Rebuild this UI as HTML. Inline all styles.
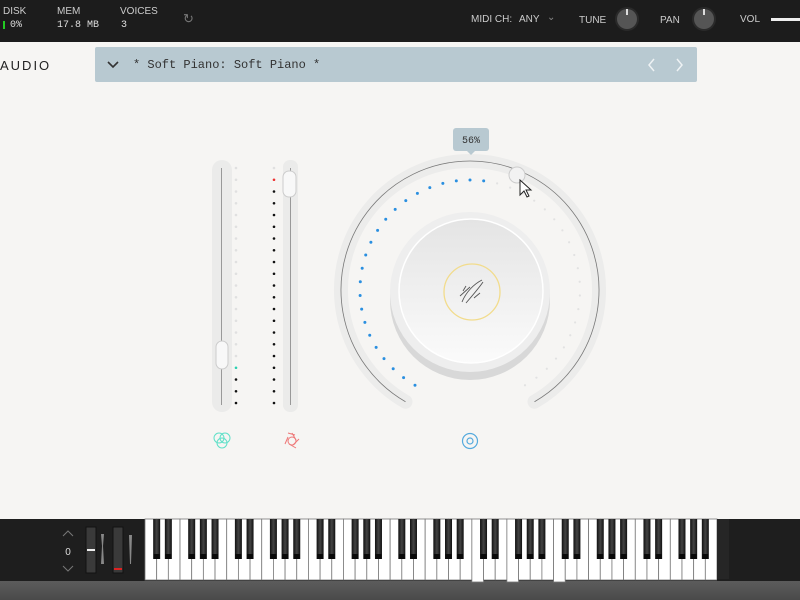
<!DOCTYPE html>
<html><head><meta charset="utf-8"><style>
body{margin:0;width:800px;height:600px;overflow:hidden;background:#f6f5f3;font-family:"Liberation Sans",sans-serif;position:relative}
.top{position:absolute;left:0;top:0;width:800px;height:42px;background:#1c1c1c;color:#ddd}
.t{position:absolute;font-size:10px;color:#ccc}
.m{position:absolute;font-family:"Liberation Mono",monospace;font-size:10px;color:#ddd}
.preset{position:absolute;left:95px;top:47px;width:602px;height:35px;background:#b8c9d1;border-radius:2px}
</style></head><body>
<div class="top">
<div class="t" style="left:3px;top:6px">DISK</div>
<div style="position:absolute;left:3px;top:21px;width:2px;height:8px;background:#2c2"></div>
<div class="m" style="left:10px;top:20px">0%</div>
<div class="t" style="left:57px;top:6px">MEM</div>
<div class="m" style="left:57px;top:20px">17.8 MB</div>
<div class="t" style="left:120px;top:6px">VOICES</div>
<div class="m" style="left:121px;top:20px">3</div>
<div class="t" style="left:183px;top:11px;font-size:13px;color:#777">↻</div>
<div class="t" style="left:471px;top:14px">MIDI CH:</div>
<div class="t" style="left:519px;top:14px">ANY</div>
<div class="t" style="left:547px;top:12px;color:#888">⌄</div>
<div class="t" style="left:579px;top:15px">TUNE</div>
<div style="position:absolute;left:617px;top:9px;width:20px;height:20px;border-radius:50%;background:#555;box-shadow:0 0 0 2px #2a2a2a"></div>
<div style="position:absolute;left:626px;top:9px;width:2px;height:6px;background:#ddd"></div>
<div class="t" style="left:660px;top:15px">PAN</div>
<div style="position:absolute;left:694px;top:9px;width:20px;height:20px;border-radius:50%;background:#555;box-shadow:0 0 0 2px #2a2a2a"></div>
<div style="position:absolute;left:703px;top:9px;width:2px;height:6px;background:#ddd"></div>
<div class="t" style="left:740px;top:14px">VOL</div>
<div style="position:absolute;left:771px;top:18px;width:29px;height:3px;background:#eee"></div>
</div>
<div style="position:absolute;left:0;top:58px;font-size:13px;letter-spacing:2px;color:#222">AUDIO</div>
<div class="preset">
<svg style="position:absolute;left:12px;top:13px" width="12" height="9"><path d="M1 2 L6 7 L11 2" stroke="#333" stroke-width="1.6" fill="none"/></svg>
<div style="position:absolute;left:38px;top:11px;font-family:'Liberation Mono',monospace;font-size:12px;color:#333">* Soft Piano: Soft Piano *</div>
<svg style="position:absolute;left:552px;top:11px" width="40" height="14"><path d="M7 1 L2 7 L7 13 M30 1 L35 7 L30 13" stroke="#eef2f4" stroke-width="1.5" fill="none"/></svg>
</div>
<svg id="main" width="800" height="600" style="position:absolute;left:0;top:0">
<defs>
<linearGradient id="kg" x1="0" y1="0" x2="0" y2="1"><stop offset="0" stop-color="#e4e4e4"/><stop offset="1" stop-color="#fbfbfb"/></linearGradient>
<linearGradient id="bk" x1="0" y1="0" x2="1" y2="0"><stop offset="0" stop-color="#111"/><stop offset=".5" stop-color="#444"/><stop offset="1" stop-color="#111"/></linearGradient>
<linearGradient id="bg" x1="0" y1="0" x2="0" y2="1"><stop offset="0" stop-color="#5c5c5c"/><stop offset="1" stop-color="#4a4a4a"/></linearGradient>
</defs>
<rect x="212" y="160" width="20" height="252" rx="10" fill="#ebebea"/>
<line x1="221.5" y1="168" x2="221.5" y2="405" stroke="#999" stroke-width="1"/>
<rect x="216" y="341" width="12" height="28" rx="6" fill="#f8f8f8" stroke="#ccc"/>
<rect x="283" y="160" width="15" height="252" rx="7" fill="#ebebea"/>
<line x1="290.5" y1="168" x2="290.5" y2="405" stroke="#999" stroke-width="1"/>
<rect x="283" y="171" width="13" height="26" rx="6" fill="#f8f8f8" stroke="#ccc"/>
<g id="dots"></g>
<path id="track" fill="none" stroke="#ececeb" stroke-width="14" stroke-linecap="round"/>
<path id="track2" fill="none" stroke="#777" stroke-width="0.8"/>
<circle cx="470" cy="300" r="80" fill="#d8d8d8"/>
<circle cx="470" cy="292" r="80" fill="#eeeeee"/>
<circle cx="471" cy="291" r="72" fill="url(#kg)" stroke="#fff" stroke-width="1.5"/>
<circle cx="472" cy="292" r="28" fill="none" stroke="#f2dc8c" stroke-width="1.3"/>
<path d="M462 302 C466 292 474 284 482 280 M466 303 C472 296 479 288 483 282 M460 296 L470 287 M474 298 L480 293 M463 291 L466 286" stroke="#555" stroke-width="0.9" fill="none"/>
<circle cx="517" cy="175" r="8" fill="#f2f2f2" stroke="#ccc"/>
<path d="M520 180 L520 195 L524 191 L527 197 L529 196 L526 190 L531 190 Z" fill="#fff" stroke="#222" stroke-width="1"/>
<rect x="453" y="128" width="36" height="23" rx="3" fill="#b8c9d1"/>
<path d="M467 151 L471 155 L475 151Z" fill="#b8c9d1"/>
<text x="471" y="143" font-family="Liberation Mono,monospace" font-size="10" fill="#333" text-anchor="middle">56%</text>
<g fill="none" stroke="#5fe0c8" stroke-width="1"><circle cx="219" cy="438" r="5"/><circle cx="225" cy="438" r="5"/><circle cx="222" cy="443" r="5"/></g>
<g fill="none" stroke="#ee7777" stroke-width="1"><circle cx="292" cy="441" r="4"/><path d="M292 433 L296 440 M299 439 L293 445 M296 448 L289 444 M285 444 L288 437 M288 433 L295 435"/></g>
<g fill="none" stroke="#55aadd" stroke-width="1.2"><circle cx="470" cy="441" r="7.5"/><circle cx="470" cy="441" r="3"/></g>
<rect x="0" y="519" width="800" height="62" fill="#1e1e1e"/>
<rect x="0" y="581" width="800" height="19" fill="url(#bg)"/>
<path d="M63 536 L68 531 L73 536 M63 566 L68 571 L73 566" stroke="#777" fill="none"/>
<text x="68" y="555" font-size="10" fill="#ddd" text-anchor="middle" font-family="Liberation Sans">0</text>
<rect x="86" y="527" width="10" height="46" fill="#3a3a3a" stroke="#111"/>
<rect x="87" y="549" width="8" height="2" fill="#eee"/>
<rect x="113" y="527" width="10" height="46" fill="#3a3a3a" stroke="#111"/>
<rect x="114" y="568" width="8" height="2" fill="#d22"/>
<path d="M101 534 L104 534 L103 546 L104 564 L101 564 L102 546Z" fill="#888"/>
<path d="M129 535 L132 535 L131 564 L130 564Z" fill="#888"/>
<g id="keys"></g>
</svg>
<script>
var s='';
function pt(r,a){a=a*Math.PI/180;return [470+r*Math.sin(a),290-r*Math.cos(a)];}
var a0=-150,a1=150;
var p0=pt(129,a0),p1=pt(129,a1);
var d='M'+p0[0]+' '+p0[1]+' A129 129 0 1 1 '+p1[0]+' '+p1[1];
document.getElementById('track').setAttribute('d',d);
document.getElementById('track2').setAttribute('d',d);
for(var i=0;i<=42;i++){var a=-150+i*300/42;var p=pt(110,a);var c=a<=12?'#2a8fe0':'#e2e2e2';s+='<circle cx="'+p[0]+'" cy="'+p[1]+'" r="'+(a<=12?1.5:1.1)+'" fill="'+c+'"/>';}
for(var j=0;j<21;j++){var y=168+j*11.75;
var c1=j<17?'#e0e0e0':(j==17?'#2ad0b0':'#111');s+='<circle cx="236" cy="'+y+'" r="1.3" fill="'+c1+'"/>';
var c2=j==0?'#e0e0e0':(j==1?'#e33':'#111');s+='<circle cx="274" cy="'+y+'" r="1.3" fill="'+c2+'"/>';}
document.getElementById('dots').innerHTML=s;
var k='',w=572/49,x0=145;var pressed={28:1,31:1,35:1};
k+='<rect x="145" y="519" width="572" height="61" fill="#fff"/>';
for(var i=0;i<49;i++){var x=x0+i*w;k+='<rect x="'+x+'" y="519" width="'+w+'" height="'+(pressed[i]?63:61)+'" fill="#fff" stroke="#777" stroke-width="0.8"/>';}
var bl=[1,1,0,1,1,1,0];
for(var i=0;i<48;i++){if(bl[i%7]){var x=x0+(i+1)*w-3.5;k+='<rect x="'+x+'" y="519" width="7" height="40" fill="url(#bk)"/><rect x="'+(x+0.5)+'" y="554" width="6" height="5" fill="#0a0a0a"/>';}}
k+='<rect x="717" y="519" width="83" height="62" fill="#1e1e1e"/><rect x="717" y="519" width="12" height="60" fill="#262626"/>';
document.getElementById('keys').innerHTML=k;
</script>
</body></html>
